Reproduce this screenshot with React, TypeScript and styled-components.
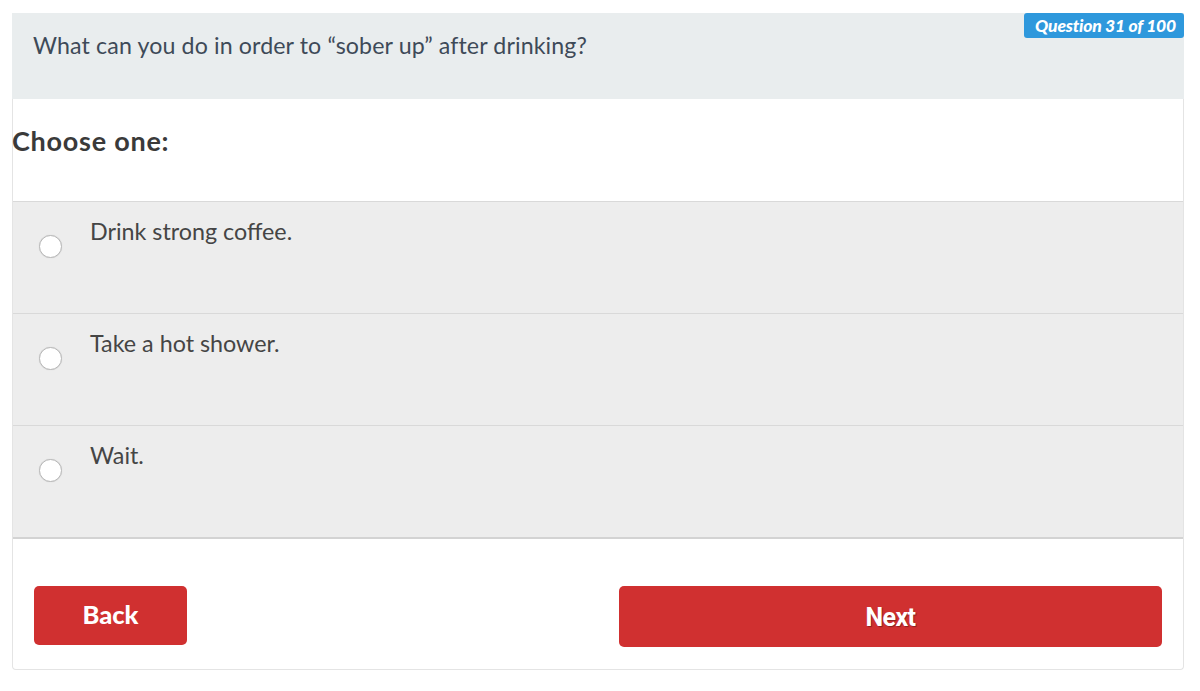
import styled, { createGlobalStyle } from "styled-components";

const GlobalStyle = createGlobalStyle`
  html, body {
    margin: 0;
    padding: 0;
    background: #ffffff;
  }
  body {
    font-family: "Lato", "Open Sans", sans-serif;
  }
`;

const Page = styled.div`
  padding: 13px 16px 22px 12px;
`;

const Card = styled.div`
  position: relative;
  border: 1px solid #e4e4e4;
  border-top: none;
  border-radius: 0 0 4px 4px;
  background: #ffffff;
`;

const QuestionHeader = styled.div`
  background-color: #e9edee;
  height: 86px;
  padding: 18px 21px 0 21px;
  box-sizing: border-box;
  font-size: 23.2px;
  letter-spacing: 0.12px;
  color: #3e4a58;
  margin: 0 -1px;
`;

const Badge = styled.div`
  position: absolute;
  top: 0;
  right: -1px;
  height: 25px;
  padding: 0 8px 0 11px;
  display: flex;
  align-items: center;
  background-color: #2e98dc;
  border-radius: 3px;
  color: #ffffff;
  font-size: 17.5px;
  font-weight: 900;
  font-style: italic;
  letter-spacing: -0.2px;
`;

const PromptSection = styled.div`
  height: 102px;
  display: flex;
  align-items: center;
  padding-bottom: 20px;
  box-sizing: border-box;
`;

const Prompt = styled.div`
  margin-left: -1px;
  font-size: 27px;
  font-weight: 700;
  color: #3a3a3a;
  letter-spacing: 0.75px;
`;

const OptionList = styled.div`
  border-bottom: 2px solid #d3d3d3;
`;

const OptionRow = styled.label`
  display: flex;
  align-items: flex-start;
  height: 112px;
  box-sizing: border-box;
  background-color: #ededed;
  border-top: 1px solid #d9d9d9;
  padding: 15px 0 0 26px;
  cursor: pointer;
`;

const Radio = styled.span`
  width: 21px;
  height: 21px;
  margin-top: 18px;
  border-radius: 50%;
  background: #ffffff;
  border: 1px solid #b8b8b8;
  box-shadow: 0 0 1px rgba(0, 0, 0, 0.15);
  flex-shrink: 0;
`;

const OptionText = styled.span`
  margin-left: 28px;
  font-size: 23.3px;
  color: #454545;
  line-height: 28px;
`;

const Footer = styled.div`
  display: flex;
  justify-content: space-between;
  padding: 47px 21px 22px 21px;
`;

const ActionButton = styled.button<{ $wide?: boolean; $shadow?: boolean }>`
  height: ${(p) => (p.$wide ? "61px" : "59px")};
  width: ${(p) => (p.$wide ? "543px" : "153px")};
  border: none;
  border-radius: 5px;
  background-color: #d03030;
  color: #ffffff;
  font-family: ${(p) => (p.$shadow ? "Roboto" : "Lato")}, sans-serif;
  font-size: ${(p) => (p.$shadow ? "25px" : "25.5px")};
  font-weight: ${(p) => (p.$shadow ? 700 : 900)};
  letter-spacing: ${(p) => (p.$shadow ? "-0.6px" : "0")};
  text-shadow: ${(p) => (p.$shadow ? "1px 1px 1px rgba(0,0,0,0.35)" : "none")};
  cursor: pointer;
  padding-bottom: ${(p) => (p.$wide ? "0" : "4px")};
`;

const options = ["Drink strong coffee.", "Take a hot shower.", "Wait."];

export default function App() {
  return (
    <>
      <GlobalStyle />
      <Page>
        <Card>
          <QuestionHeader>
            What can you do in order to “sober up” after drinking?
          </QuestionHeader>
          <Badge>Question 31 of 100</Badge>
          <PromptSection>
            <Prompt>Choose one:</Prompt>
          </PromptSection>
          <OptionList>
            {options.map((text) => (
              <OptionRow key={text}>
                <Radio />
                <OptionText>{text}</OptionText>
              </OptionRow>
            ))}
          </OptionList>
          <Footer>
            <ActionButton>Back</ActionButton>
            <ActionButton $wide $shadow>
              Next
            </ActionButton>
          </Footer>
        </Card>
      </Page>
    </>
  );
}
